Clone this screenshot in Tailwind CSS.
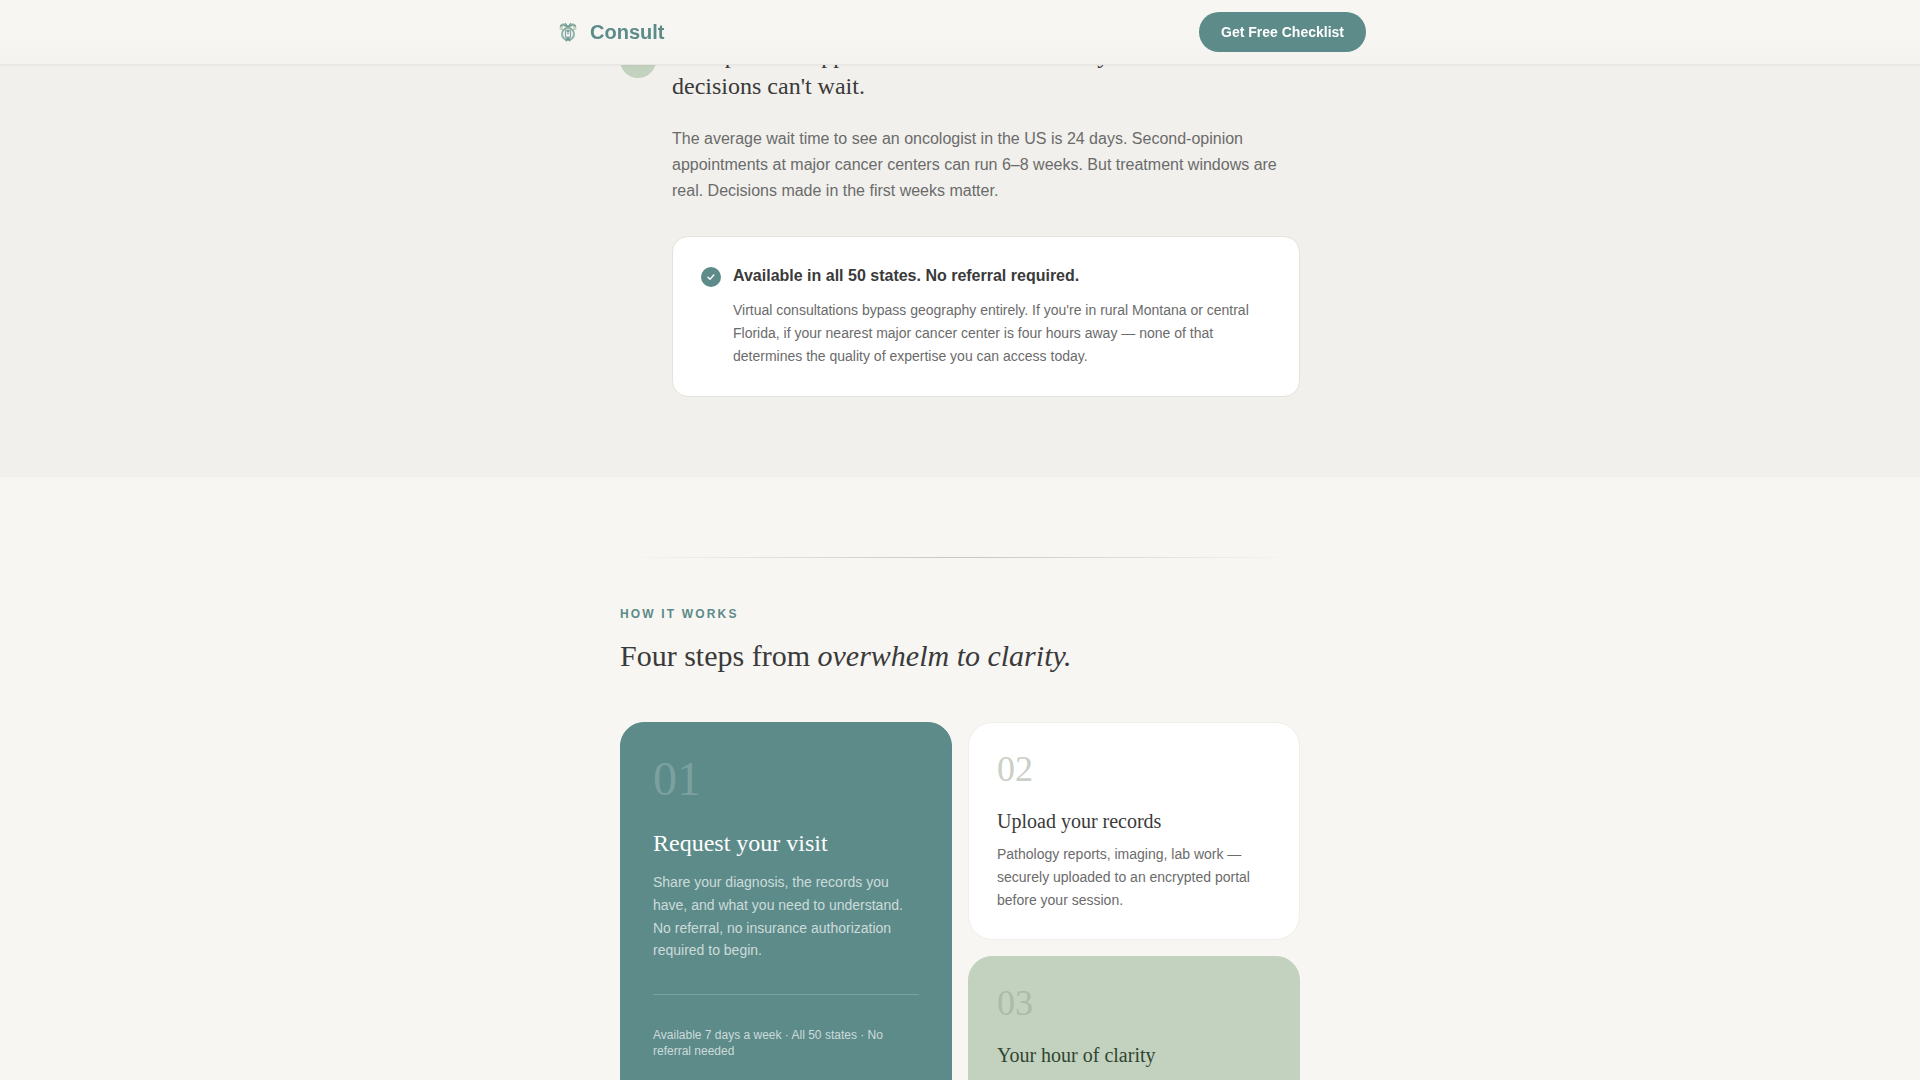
<!DOCTYPE html>
<html lang="en">

<head>
    <meta charset="UTF-8">
    <meta name="viewport" content="width=device-width, initial-scale=1.0">
    <title>Consult</title>
    <script src="https://cdn.jsdelivr.net/npm/@tailwindcss/browser@4"></script>
</head>

<body class="bg-[#f7f6f3] font-['Liberation_Sans',sans-serif] text-[#3a3a3a] h-screen overflow-hidden">
    <nav class="fixed inset-x-0 top-0 z-10 bg-linear-to-b from-[#f7f6f3] from-50% to-[#f4f3f0] border-b border-[#e6e5e1] shadow-[0_1px_2px_rgba(0,0,0,0.04)]">
        <div class="max-w-[860px] mx-auto px-6 h-16 flex items-center justify-between">
            <a href="#" class="flex items-center gap-2 text-xl font-bold text-[#5c8b89]">
                <svg class="w-7 h-7" viewBox="0 0 28 28" fill="none" stroke-linecap="round">
                    <path d="M7 10.500C7 6.500 10 5 13 9M21 10.500C21 6.500 18 5 15 9" stroke="#c3d2be" stroke-width="3" />
                    <path d="M11.500 5.500l2.500 3.500 2.500-3.500M6.500 8c2-2 5-1.500 7.500 2 2.500-3.500 5.500-4 7.500-2M8.500 12c2-1 3.500 0 5.500 1.500 2-1.500 3.500-2.500 5.500-1.500" stroke="#5c8b89" stroke-opacity=".8" stroke-width="1.200" />
                    <circle cx="14" cy="16" r="6" stroke="#8fb3a9" stroke-width="2" />
                    <path d="M11.500 13.500v5l2.500 3 2.500-3v-5M14 12v4M12 23l2-4 2 4" stroke="#5c8b89" stroke-opacity=".8" stroke-width="1.200" />
                </svg>
                Consult
            </a>
            <button class="h-10 px-[22px] rounded-full bg-[#5c8b89] text-white text-sm font-bold">Get Free Checklist</button>
        </div>
    </nav>

    <section class="bg-[#f1f0ec] pt-10 pb-20">
        <div class="max-w-[728px] mx-auto px-6 flex gap-4">
            <div class="w-9 h-9 mt-0.5 shrink-0 rounded-full bg-[#c3d2be]"></div>
            <div class="flex-1">
                <h3 class="font-['Liberation_Serif',serif] text-2xl leading-[31px]">The specialist appointment is six weeks away. Treatment decisions can't wait.</h3>
                <p class="mt-6 text-base leading-[26px] text-[#6b6b6b]">The average wait time to see an oncologist in the US is 24 days. Second-opinion appointments at major cancer centers can run 6–8 weeks. But treatment windows are real. Decisions made in the first weeks matter.</p>
                <div class="mt-8 p-7 flex gap-3 rounded-2xl bg-white border border-[#e2e4dc]">
                    <svg class="w-5 h-5 mt-0.5 shrink-0" viewBox="0 0 20 20" fill="none">
                        <circle cx="10" cy="10" r="10" fill="#5c8b89" />
                        <path d="M7 10.300l2 2 3.800-4.300" stroke="#fff" stroke-width="1.500" stroke-linecap="round" stroke-linejoin="round" />
                    </svg>
                    <div>
                        <h4 class="text-base leading-[22px] font-bold">Available in all 50 states. No referral required.</h4>
                        <p class="mt-3 text-sm leading-[23px] text-[#6b6b6b]">Virtual consultations bypass geography entirely. If you're in rural Montana or central Florida, if your nearest major cancer center is four hours away — none of that determines the quality of expertise you can access today.</p>
                    </div>
                </div>
            </div>
        </div>
    </section>

    <section class="py-20">
        <div class="max-w-[728px] mx-auto px-6">
            <div class="h-px bg-linear-to-r from-transparent via-[#c4c8c0] to-transparent"></div>
            <p class="mt-12 text-xs leading-4 font-bold tracking-[0.18em] uppercase text-[#5c8b89]">How it works</p>
            <h2 class="mt-4 font-['Liberation_Serif',serif] text-3xl leading-9">Four steps from <em>overwhelm to clarity.</em></h2>

            <div class="mt-12 grid grid-cols-2 auto-rows-fr gap-4">
                <div class="row-span-2 p-8 rounded-3xl border border-[#5c8b89] bg-[#5c8b89] text-white">
                    <div class="font-['Liberation_Serif',serif] text-5xl leading-12 text-white/20">01</div>
                    <h3 class="mt-6 font-['Liberation_Serif',serif] text-2xl leading-8">Request your visit</h3>
                    <p class="mt-3 text-sm leading-relaxed text-white/70">Share your diagnosis, the records you have, and what you need to understand. No referral, no insurance authorization required to begin.</p>
                    <p class="mt-8 pt-8 border-t border-white/20 text-xs leading-4 text-white/70">Available 7 days a week · All 50 states · No referral needed</p>
                </div>
                <div class="p-7 rounded-3xl border border-[#eeeeea] bg-white">
                    <div class="font-['Liberation_Serif',serif] text-4xl leading-9 text-[#c9d0c6]">02</div>
                    <h3 class="mt-5 font-['Liberation_Serif',serif] text-xl leading-7">Upload your records</h3>
                    <p class="mt-2 text-sm leading-relaxed text-[#6b6b6b]">Pathology reports, imaging, lab work — securely uploaded to an encrypted portal before your session.</p>
                </div>
                <div class="p-7 rounded-3xl border border-[#c3d2be] bg-[#c3d2be] text-[#2f4532]">
                    <div class="font-['Liberation_Serif',serif] text-4xl leading-9 text-[#aabba7]">03</div>
                    <h3 class="mt-5 font-['Liberation_Serif',serif] text-xl leading-7">Your hour of clarity</h3>
                </div>
            </div>
        </div>
    </section>
</body>

</html>
